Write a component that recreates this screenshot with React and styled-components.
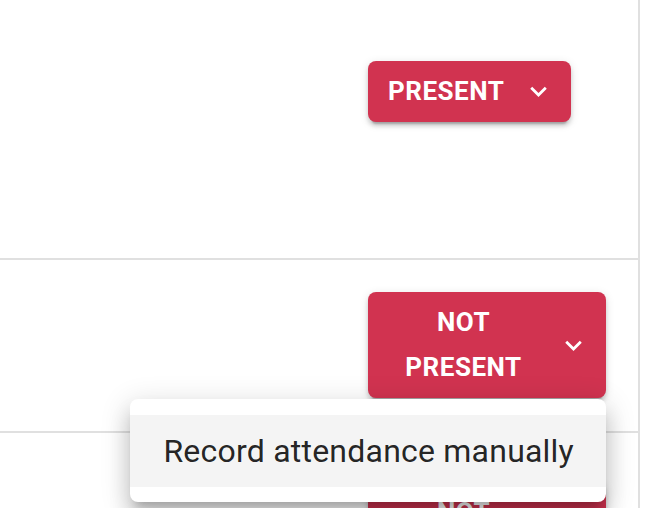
import React from "react";
import styled, { createGlobalStyle } from "styled-components";

const Global = createGlobalStyle`
  html, body { margin: 0; padding: 0; background: #ffffff; }
  body { font-family: Roboto, "Liberation Sans", Arial, sans-serif; overflow: hidden; }
  * { box-sizing: border-box; }
`;

const Card = styled.div`
  width: 640px;
  height: 508px;
  border-right: 2px solid #e0e0e0;
  background: #ffffff;
  display: flex;
  flex-direction: column;
`;

const Row = styled.div`
  display: flex;
  justify-content: flex-end;
  align-items: flex-start;
  padding: ${(p) => p.$pad};
  height: ${(p) => p.$h};
  border-bottom: ${(p) => (p.$last ? "none" : "2px solid #e0e0e0")};
  flex-shrink: 0;
`;

const Column = styled.div`
  width: 238px;
  position: relative;
  z-index: ${(p) => (p.$raised ? 5 : 1)};
`;

const StatusButton = styled.button`
  display: inline-flex;
  align-items: center;
  max-width: 238px;
  padding: 8px 16px 8px 20px;
  border: none;
  border-radius: 8px;
  background: #d13350;
  color: #ffffff;
  font-family: Roboto, "Liberation Sans", Arial, sans-serif;
  font-size: 26px;
  font-weight: 700;
  line-height: 45px;
  letter-spacing: 0.5px;
  text-transform: uppercase;
  box-shadow: 0 6px 2px -4px rgba(0, 0, 0, 0.2), 0 4px 4px 0 rgba(0, 0, 0, 0.14),
    0 2px 10px 0 rgba(0, 0, 0, 0.12);
  cursor: pointer;
`;

const Label = styled.span`
  text-align: center;
  flex: 0 1 auto;
`;

const Chevron = styled.svg`
  width: 33px;
  height: 33px;
  flex-shrink: 0;
  margin-left: 18px;
  fill: #ffffff;
`;

const Menu = styled.div`
  position: absolute;
  top: calc(100% + 1px);
  right: 0;
  background: #ffffff;
  border-radius: 8px;
  padding: 16px 0 15px;
  white-space: nowrap;
  box-shadow: 0px 10px 10px -6px rgba(0, 0, 0, 0.2), 0px 16px 20px 2px rgba(0, 0, 0, 0.14),
    0px 6px 28px 4px rgba(0, 0, 0, 0.12);
`;

const MenuItem = styled.div`
  padding: 12px 32px 12px 33px;
  font-size: 32px;
  line-height: 48px;
  letter-spacing: 0.22px;
  color: rgba(0, 0, 0, 0.87);
  background: ${(p) => (p.$active ? "#f4f4f4" : "transparent")};
`;

const ExpandIcon = () => (
  <Chevron viewBox="0 0 24 24" aria-hidden="true">
    <path d="M16.59 8.59 12 13.17 7.41 8.59 6 10l6 6 6-6z" />
  </Chevron>
);

export default function App() {
  return (
    <>
      <Global />
      <Card>
        <Row $pad="61px 32px 0 0" $h="260px">
          <Column>
            <StatusButton>
              <Label>Present</Label>
              <ExpandIcon />
            </StatusButton>
          </Column>
        </Row>
        <Row $pad="32px 32px 0 0" $h="173px">
          <Column $raised>
            <StatusButton>
              <Label>Not present</Label>
              <ExpandIcon />
            </StatusButton>
            <Menu>
              <MenuItem $active>Record attendance manually</MenuItem>
            </Menu>
          </Column>
        </Row>
        <Row $pad="49px 32px 0 0" $h="200px" $last>
          <Column>
            <StatusButton>
              <Label>Not present</Label>
              <ExpandIcon />
            </StatusButton>
          </Column>
        </Row>
      </Card>
    </>
  );
}
